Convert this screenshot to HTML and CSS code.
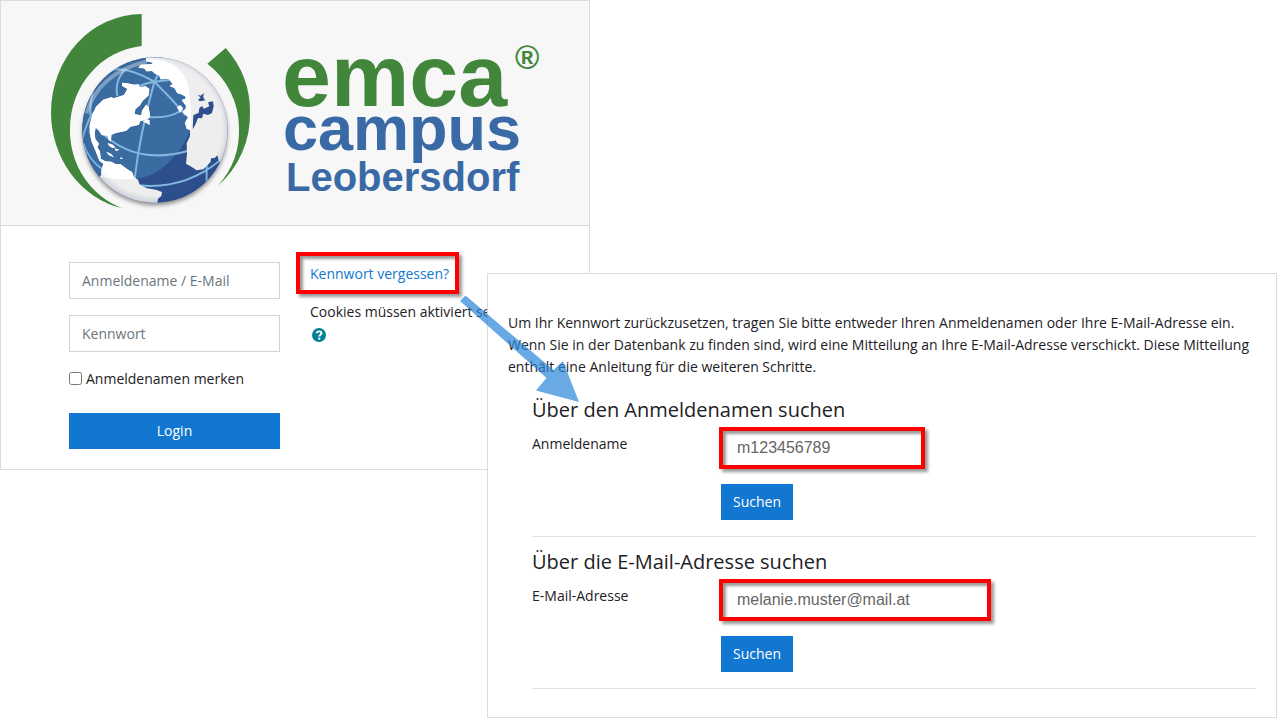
FILE: index.html
```html
<!DOCTYPE html>
<html lang="de">

<head>
    <meta charset="UTF-8">
    <meta name="viewport" content="width=device-width, initial-scale=1.0">
    <title>emca campus Leobersdorf - Kennwort vergessen</title>
    <link rel="stylesheet" href="styles.css">
</head>

<body>
    <main class="guide">
        <!-- Login -->
        <section class="panel login">
            <header class="login-header">
                <svg class="logo" viewBox="1 1 588 224" role="img" aria-label="emca campus Leobersdorf">
                    <defs>
                        <clipPath id="globe"><circle cx="345" cy="390" r="218"/></clipPath>
                        <clipPath id="gloss"><path d="M120 170H320Q420 182 443 250Q455 310 453 388Q420 470 345 520Q280 550 190 532L120 530Z"/></clipPath>
                        <radialGradient id="rim" cx="345" cy="385" r="222" gradientUnits="userSpaceOnUse">
                            <stop offset="0.9" stop-color="#203a70" stop-opacity="0"/>
                            <stop offset="1" stop-color="#203a70" stop-opacity="0.15"/>
                        </radialGradient>
                        <filter id="soft" x="-20%" y="-20%" width="140%" height="140%"><feGaussianBlur stdDeviation="7"/></filter>
                        <g id="land">
                            <path d="M318 172L600 172V485H537L532 466L523 475L514 474L511 487L490 508L470 511L460 504L450 498L438 491L441 462L440 430L450 408L450 390L440 386L435 368L444 352L431 340L428 334L437 326L438 318L425 300L436 296L437 290L424 283L412 280L403 264L389 258L398 252L385 236L362 238L357 226L346 222L336 213L320 214L312 205L295 204L302 194L335 192L340 188L318 184Z"/>
                            <path d="M246 248L262 250L282 254L296 253L299 262L317 259L328 267L326 286L315 296L308 302L300 316L286 328L284 343L304 346L306 332L318 314L326 322L330 344L328 354L312 361L300 364L297 374L271 380L259 392L225 400L214 405L213 424L207 421L202 407L185 405L176 390L167 383L164 399L166 417L177 431L172 442L180 454L182 476L196 484L214 485L228 493L242 493L262 508L276 516L282 532L294 539L299 554L321 565L347 569L366 576L364 588L354 596L350 620H120L184 524L184 512L190 491L178 482L168 456L155 425L149 399L149 374L157 345L168 320L190 299L214 292L221 295L252 285L262 267L246 257Z"/>
                            <path d="M203 430L216 433L226 442L218 444L207 437ZM224 445L238 449L228 453ZM309 365L320 358L328 360L329 375L319 369ZM199 455L213 462L222 472L207 466ZM241 472L250 476L242 477ZM411 321L421 316L429 325L420 338Z"/>
                        </g>
                    </defs>
                    <svg x="40" y="0" width="220" height="225" viewBox="0 0 660 675">
                        <path fill="#41863b" d="M305 42A272 295 0 0 0 33 337A272 295 0 0 0 247 625A240 248 0 0 1 90 385A240 248 0 0 1 305 138Z"/>
                        <path fill="#41863b" d="M557 144A285 286 0 0 1 630 335A285 286 0 0 1 533 558A237 242 0 0 0 597 385A237 242 0 0 0 502 191Z"/>
                        <circle cx="345" cy="399" r="217" fill="#555" opacity="0.65" filter="url(#soft)"/>
                        <g clip-path="url(#globe)">
                            <rect x="120" y="160" width="460" height="460" fill="#2d4f8e"/>
                            <rect x="120" y="160" width="460" height="460" fill="#3a6ca1" clip-path="url(#gloss)"/>
                            <g fill="none" stroke="#82b7df" stroke-width="6">
                                <path d="M343 245Q250 190 190 216Q145 270 152 350M343 245Q270 255 225 330M232 288Q222 240 258 207M343 245Q390 290 437 345M343 245Q300 400 284 535M300 257Q330 245 387 240M343 245L355 222M318 350Q380 358 422 333M172 385Q280 500 445 452M126 420Q145 350 165 335M130 430Q145 480 190 510M296 556Q430 570 537 484M500 490V550"/>
                            </g>
                            <use href="#land" fill="#eeeeef"/>
                            <g clip-path="url(#gloss)"><use href="#land" fill="#fff"/></g>
                            <!-- Mittelmeer, Schwarzes Meer und Nordsee -->
                            <path fill="#2d4f8e" d="M460 346L476 338L478 324L486 318L492 326L508 319L504 307L519 304L521 319L516 339L504 345L490 341L486 355L474 354L466 374L458 388ZM473 284L482 287L491 280L490 293L496 301L480 304L474 299L482 293Z"/>
                            <path fill="none" stroke="#3a6ca1" stroke-width="5" d="M390 263L402 270L410 286L426 292M398 274L410 290"/>
                            <circle cx="345" cy="390" r="218" fill="url(#rim)"/>
                            <path fill="none" stroke="#fff" stroke-width="12" opacity="0.35" d="M140 340Q175 220 320 184"/>
                        </g>
                    </svg>
                    <g class="logo-text">
                        <text class="logo-emca" x="282" y="106">emca</text>
                        <text class="logo-mark" x="515" y="69">®</text>
                        <text class="logo-campus" x="283" y="150">campus</text>
                        <text class="logo-place" x="286" y="191">Leobersdorf</text>
                    </g>
                </svg>
            </header>
            <div class="login-body">
                <form class="login-form">
                    <input class="field" type="text" placeholder="Anmeldename / E-Mail" aria-label="Anmeldename / E-Mail">
                    <input class="field" type="password" placeholder="Kennwort" aria-label="Kennwort">
                    <div class="remember">
                        <input type="checkbox" id="remember">
                        <label for="remember">Anmeldenamen merken</label>
                    </div>
                    <button class="btn" type="button">Login</button>
                </form>
                <div class="login-help">
                    <a class="forgot highlight" href="#reset">Kennwort vergessen?</a>
                    <div class="cookies">
                        <span>Cookies müssen aktiviert sein</span>
                        <button class="help" type="button" aria-label="Hilfe">
                            <svg viewBox="0 0 14 14" width="14" height="14">
                                <circle cx="7" cy="7" r="7" fill="#008196"/>
                                <path d="M4.6 5.3C4.9 3.9 5.8 3.4 7 3.4C8.5 3.4 9.5 4.2 9.5 5.3C9.5 6.9 7.3 6.8 7.3 8.5" fill="none" stroke="#fff" stroke-width="1.9"/>
                                <circle cx="7.2" cy="10.6" r="1.2" fill="#fff"/>
                            </svg>
                        </button>
                    </div>
                </div>
            </div>
        </section>

        <!-- Kennwort zurücksetzen -->
        <section class="panel reset" id="reset">
            <p class="intro">Um Ihr Kennwort zurückzusetzen, tragen Sie bitte entweder Ihren Anmeldenamen oder Ihre E-Mail-Adresse ein. Wenn Sie in der Datenbank zu finden sind, wird eine Mitteilung an Ihre E-Mail-Adresse verschickt. Diese Mitteilung enthält eine Anleitung für die weiteren Schritte.</p>
            <form class="search">
                <h2>Über den Anmeldenamen suchen</h2>
                <div class="search-row">
                    <label for="username">Anmeldename</label>
                    <input class="search-input highlight" type="text" id="username" value="m123456789">
                </div>
                <button class="btn" type="button">Suchen</button>
            </form>
            <form class="search">
                <h2>Über die E-Mail-Adresse suchen</h2>
                <div class="search-row">
                    <label for="email">E-Mail-Adresse</label>
                    <input class="search-input wide highlight" type="email" id="email" value="melanie.muster@mail.at">
                </div>
                <button class="btn" type="button">Suchen</button>
            </form>
            <svg class="arrow" viewBox="459 295 120 108" width="120" height="108" aria-hidden="true">
                <path d="M465.5 295.5L553.5 370L563 361L579 402L536 390.5L546.5 378L460 301Z"/>
            </svg>
        </section>
    </main>
</body>

</html>
```
FILE: styles.css
```css
* {
    box-sizing: border-box;
}

body {
    margin: 0;
    background-color: #fff;
    color: #1d2125;
    font-family: "Segoe UI", "Open Sans", sans-serif;
    font-size: 14px;
    line-height: 22px;
}

input,
button {
    font: inherit;
}

/* the two panels share the middle column and overlap there */
.guide {
    display: grid;
    grid-template-columns: 487fr 103fr 687fr;
    grid-template-rows: 273px auto;
    padding-right: 3px;
}

.panel {
    background-color: #fff;
    border: 1px solid #dcdcdc;
}

.highlight {
    border: 4px solid #f00;
    box-shadow: 3px 3px 3px rgba(0, 0, 0, 0.4), inset 3px 3px 3px rgba(0, 0, 0, 0.4);
}

.btn {
    height: 36px;
    padding: 0 12px;
    border: none;
    background-color: #1177d1;
    color: #fff;
    cursor: pointer;
}

/* Login */
.login {
    grid-column: 1 / 3;
    grid-row: 1 / 3;
    align-self: start;
}

.login-header {
    background-color: #f7f7f7;
    border-bottom: 1px solid #d8d8d8;
}

.logo {
    display: block;
    width: 100%;
    max-width: 588px;
}

.logo-text {
    font-family: "Liberation Sans", Arial, sans-serif;
    font-weight: bold;
    fill: #3a6aa6;
}

.logo-emca {
    font-size: 88px;
    fill: #41863b;
}

.logo-mark {
    font-size: 33px;
    fill: #41863b;
}

.logo-campus {
    font-size: 63px;
}

.logo-place {
    font-size: 40px;
}

.login-body {
    display: flex;
    gap: 16px;
    padding: 26px 68px 20px;
}

.login-form {
    display: flex;
    flex-direction: column;
    flex: 0 0 211px;
    gap: 16px;
    padding-top: 10px;
}

.field {
    width: 100%;
    height: 37px;
    padding: 0 12px;
    border: 1px solid #ced4da;
    color: #495057;
}

.field::placeholder {
    color: #6c757d;
    opacity: 1;
}

.remember {
    display: flex;
    align-items: center;
    gap: 4px;
    height: 21px;
    margin-bottom: 8px;
}

.remember input {
    width: 13px;
    height: 13px;
    margin: 0;
}

.login-help {
    flex: 1;
}

.forgot {
    display: inline-block;
    padding: 7px 6px 5px 10px;
    color: #1177d1;
    text-decoration: none;
}

.cookies {
    padding: 7px 0 0 14px;
}

.cookies span {
    display: block;
}

.help {
    display: flex;
    align-items: center;
    height: 24px;
    padding: 0 2px;
    border: none;
    background: none;
    cursor: pointer;
}

/* Kennwort zurücksetzen */
.reset {
    position: relative;
    grid-column: 2 / 4;
    grid-row: 2;
    padding: 38px 20px 28px;
}

.intro {
    margin: 0 0 19px;
}

.search {
    margin-left: 24px;
    padding-bottom: 16px;
    border-bottom: 1px solid #dee2e6;
}

.search + .search {
    margin-top: 12px;
}

.search h2 {
    margin: 0 0 4px;
    font-size: 20px;
    font-weight: 400;
    line-height: 26px;
}

.search-row {
    display: grid;
    grid-template-columns: 187px 1fr;
    height: 57px;
}

.search-row label {
    padding-top: 6px;
}

.search-input {
    width: 206px;
    height: 42px;
    padding: 0 14px;
    background-color: #fff;
    color: #666;
    font-family: "Liberation Sans", Arial, sans-serif;
    font-size: 16px;
}

.search-input.wide {
    width: 272px;
}

.search .btn {
    margin-left: 189px;
}

/* arrow from the link to the reset form */
.arrow {
    position: absolute;
    left: -29px;
    top: 21px;
    fill: rgba(42, 134, 217, 0.7);
}
```
